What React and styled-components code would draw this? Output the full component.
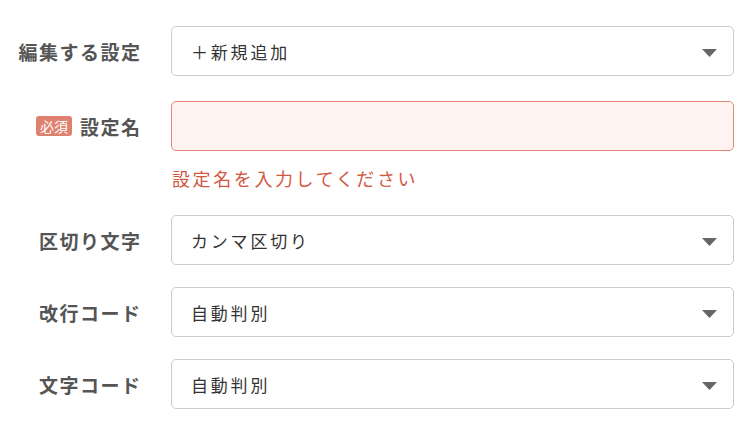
import React, { useState } from "react";
import styled, { createGlobalStyle } from "styled-components";

const GlobalStyle = createGlobalStyle`
  body {
    margin: 0;
    background: #fff;
    font-family: "Noto Sans CJK JP", "Noto Sans", sans-serif;
  }
`;

const Form = styled.form`
  display: flex;
  flex-direction: column;
  gap: 22px;
  padding: 26px 16px 0 0;
  width: 750px;
  box-sizing: border-box;
`;

const Row = styled.div`
  display: grid;
  grid-template-columns: 140px 1fr;
  column-gap: 31px;
  align-items: start;
  margin-bottom: ${(p) => (p.$first ? "3px" : "0")};
`;

const Label = styled.label`
  height: 50px;
  display: flex;
  align-items: center;
  justify-content: flex-end;
  gap: 8px;
  font-size: 19px;
  font-weight: 700;
  letter-spacing: 1.5px;
  margin-right: -1.5px;
  color: #555;
  white-space: nowrap;
`;

const Badge = styled.span`
  display: inline-flex;
  align-items: center;
  justify-content: center;
  width: 36px;
  height: 20px;
  border-radius: 3px;
  background: #e0806f;
  color: #fff;
  font-size: 14px;
  font-weight: 400;
  letter-spacing: 0;
`;

const Field = styled.div`
  display: flex;
  flex-direction: column;
`;

const SelectWrap = styled.div`
  position: relative;
`;

const Select = styled.select`
  appearance: none;
  width: 100%;
  height: 50px;
  box-sizing: border-box;
  padding: 0 48px 0 19px;
  border: 1px solid #ccc;
  border-radius: 5px;
  background: #fff;
  font-family: "Noto Sans CJK JP", "Noto Sans", sans-serif;
  font-size: 17px;
  letter-spacing: 2.8px;
  color: #333;
  outline: none;
`;

const Caret = styled.svg`
  position: absolute;
  right: 17px;
  top: 23px;
  pointer-events: none;
`;

const TextInput = styled.input`
  width: 100%;
  height: 50px;
  box-sizing: border-box;
  padding: 0 18px;
  border: 1px solid ${(p) => (p.$error ? "#e38878" : "#ccc")};
  border-radius: 5px;
  background: ${(p) => (p.$error ? "#fff3f2" : "#fff")};
  font-family: "Noto Sans CJK JP", "Noto Sans", sans-serif;
  font-size: 18px;
  color: #333;
  outline: none;
`;

const ErrorText = styled.p`
  margin: 13px 0 0;
  padding-left: 1px;
  line-height: 29px;
  font-size: 18px;
  letter-spacing: 2.6px;
  color: #d2573f;
`;

function SelectField({ value, options }) {
  const [current, setCurrent] = useState(value);
  return (
    <SelectWrap>
      <Select value={current} onChange={(e) => setCurrent(e.target.value)}>
        {options.map((o) => (
          <option key={o} value={o}>
            {o}
          </option>
        ))}
      </Select>
      <Caret width="15" height="8" viewBox="0 0 15 8">
        <path d="M0 0 H15 L7.5 8 Z" fill="#666" />
      </Caret>
    </SelectWrap>
  );
}

function App() {
  const [name, setName] = useState("");

  return (
    <>
      <GlobalStyle />
      <Form onSubmit={(e) => e.preventDefault()}>
        <Row $first>
          <Label>編集する設定</Label>
          <SelectField value="＋新規追加" options={["＋新規追加"]} />
        </Row>
        <Row>
          <Label>
            <Badge>必須</Badge>
            設定名
          </Label>
          <Field>
            <TextInput
              $error
              value={name}
              onChange={(e) => setName(e.target.value)}
            />
            <ErrorText>設定名を入力してください</ErrorText>
          </Field>
        </Row>
        <Row>
          <Label>区切り文字</Label>
          <SelectField value="カンマ区切り" options={["カンマ区切り", "タブ区切り"]} />
        </Row>
        <Row>
          <Label>改行コード</Label>
          <SelectField value="自動判別" options={["自動判別", "CRLF", "LF"]} />
        </Row>
        <Row>
          <Label>文字コード</Label>
          <SelectField value="自動判別" options={["自動判別", "UTF-8", "Shift_JIS"]} />
        </Row>
      </Form>
    </>
  );
}

export default App;
